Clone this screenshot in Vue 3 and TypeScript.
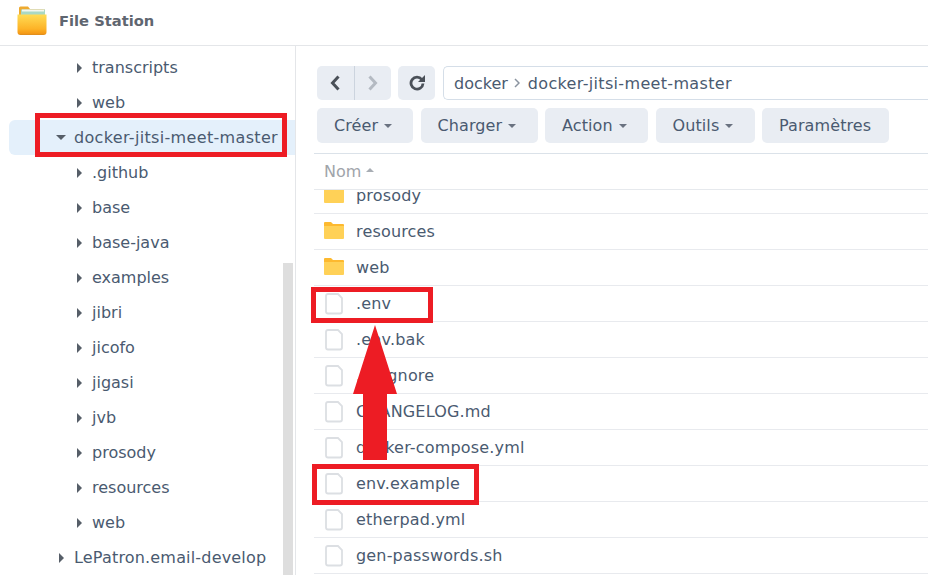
<script setup lang="ts">
const tree = [
  { name: 'transcripts', level: 2 },
  { name: 'web', level: 2 },
  { name: 'docker-jitsi-meet-master', level: 1, open: true },
  { name: '.github', level: 2 },
  { name: 'base', level: 2 },
  { name: 'base-java', level: 2 },
  { name: 'examples', level: 2 },
  { name: 'jibri', level: 2 },
  { name: 'jicofo', level: 2 },
  { name: 'jigasi', level: 2 },
  { name: 'jvb', level: 2 },
  { name: 'prosody', level: 2 },
  { name: 'resources', level: 2 },
  { name: 'web', level: 2 },
  { name: 'LePatron.email-develop', level: 1 },
]
const files = [
  { name: 'prosody', dir: true },
  { name: 'resources', dir: true },
  { name: 'web', dir: true },
  { name: '.env' },
  { name: '.env.bak' },
  { name: '.gitignore' },
  { name: 'CHANGELOG.md' },
  { name: 'docker-compose.yml' },
  { name: 'env.example' },
  { name: 'etherpad.yml' },
  { name: 'gen-passwords.sh' },
]
const actions = [
  { label: 'Créer', caret: true },
  { label: 'Charger', caret: true },
  { label: 'Action', caret: true },
  { label: 'Outils', caret: true },
  { label: 'Paramètres', caret: false },
]
</script>

<template>
  <div class="app">
    <header class="head">
      <svg class="logo" viewBox="0 0 30 30" width="30" height="30">
        <defs>
          <linearGradient id="fold" x1="0" y1="0" x2="0" y2="1">
            <stop offset="0" stop-color="#ffdc55" />
            <stop offset="0.7" stop-color="#fdb327" />
            <stop offset="0.92" stop-color="#f59a16" />
            <stop offset="1" stop-color="#d98a20" />
          </linearGradient>
        </defs>
        <path d="M2 2Q2 0.500 3.500 0.500H11l2 2.500h13Q28 3 28 5v6H2z" fill="#eeaa30" />
        <rect x="4" y="3.500" width="24" height="8" fill="#a9d8c4" />
        <rect x="5" y="3.500" width="22" height="2" fill="#f4f7ef" />
        <path d="M0.500 8.500h29v17.500q0 3-3 3H3.500q-3 0-3-3z" fill="url(#fold)" />
      </svg>
      <span class="title">File Station</span>
    </header>
    <div class="body">
      <aside class="side">
        <ul class="tree">
          <li v-for="(n, i) in tree" :key="i" class="node" :class="[`lv${n.level}`, { sel: n.open }]">
            <i :class="n.open ? 'tri-down' : 'tri-right'"></i>
            <span>{{ n.name }}</span>
          </li>
        </ul>
        <div class="scroll"></div>
      </aside>
      <main class="main">
        <div class="bar">
          <div class="group">
            <button class="icon"><svg viewBox="0 0 12 18" width="12" height="18"><path d="M9.500 2.500L3.500 9l6 6.500" fill="none" stroke="#4a5058" stroke-width="3" /></svg></button>
            <button class="icon sep"><svg viewBox="0 0 12 18" width="12" height="18"><path d="M2.500 2.500L8.500 9l-6 6.500" fill="none" stroke="#b4bac2" stroke-width="3" /></svg></button>
          </div>
          <button class="icon refresh"><svg viewBox="0 0 16 16" width="16" height="16"><path d="M12.800 4.500A6 6 0 1 0 14 8.500" fill="none" stroke="#4a5058" stroke-width="2.800" /><path d="M9 7h7V0z" fill="#4a5058" /></svg></button>
          <div class="path">
            <span>docker</span>
            <svg viewBox="0 0 6 10" width="6" height="10"><path d="M1 1l4 4-4 4" fill="none" stroke="#8b94a0" stroke-width="1.500" /></svg>
            <span class="wide">docker-jitsi-meet-master</span>
          </div>
        </div>
        <div class="actions">
          <button v-for="a in actions" :key="a.label" class="act">
            {{ a.label }}<i v-if="a.caret" class="caret"></i>
          </button>
        </div>
        <div class="colhead">Nom <i class="up"></i></div>
        <div class="listwrap">
          <ul class="list">
            <li v-for="f in files" :key="f.name" class="row">
              <svg v-if="f.dir" class="ficon folder" viewBox="0 0 20 18" width="20" height="18">
                <path d="M0 2q0-1 1-1h6l2 2h10q1 0 1 1v3H0z" fill="#fdb92f" />
                <path d="M0 5h20v12q0 1-1 1H1q-1 0-1-1z" fill="#ffd157" />
              </svg>
              <svg v-else class="ficon" viewBox="0 0 20 22" width="20" height="22">
                <path d="M2 3q0-2 2-2h10l4 4v13.500q0 2-2 2H4q-2 0-2-2z" fill="#fff" stroke="#dcdfe3" stroke-width="1.800" />
              </svg>
              <span>{{ f.name }}</span>
            </li>
          </ul>
        </div>
      </main>
    </div>
    <div class="mark m1"></div>
    <div class="mark m2"></div>
    <div class="mark m3"></div>
    <svg class="arrow" viewBox="0 0 44 135" width="44" height="135">
      <path d="M22 0L44 69H34V135H10V69H0z" fill="#ed1c24" />
    </svg>
  </div>
</template>

<style scoped>
.app { position: relative; width: 928px; height: 575px; overflow: hidden; background: #fff; font-family: "DejaVu Sans", sans-serif; font-size: 16px; color: #4a5a70; }
.head { height: 45px; border-bottom: 1px solid #e4e6e9; display: flex; align-items: center; padding-left: 17px; gap: 12px; }
.logo { flex: none; margin-top: -4px; }
.title { font-family: "DejaVu Sans", sans-serif; font-weight: 700; font-size: 14.700px; color: #5f6670; margin-top: -5px; }
.body { display: flex; height: 529px; }
.side { position: relative; width: 295px; flex: none; border-right: 1px solid #e4e6e9; overflow: hidden; }
.tree { list-style: none; margin: 4px 0 0; padding: 0; }
.node { height: 35px; display: flex; align-items: center; position: relative; white-space: nowrap; }
.lv1 { padding-left: 59px; letter-spacing: 0.180px; }
.lv2 { padding-left: 77px; }
.node span { margin-left: 10px; }
.sel { margin-left: 9px; padding-left: 47px; background: #e4f0fb; border-radius: 6px 0 0 6px; letter-spacing: 0.330px; }
.sel span { margin-left: 11px; }
.tri-right { width: 0; height: 0; border-left: 5px solid #565e68; border-top: 5px solid transparent; border-bottom: 5px solid transparent; }
.tri-down { width: 0; height: 0; border-top: 5px solid #565e68; border-left: 5.500px solid transparent; border-right: 5.500px solid transparent; margin-right: -3px; }
.scroll { position: absolute; left: 283px; top: 217px; bottom: 0; width: 10px; background: #dedede; }
.main { flex: 1; min-width: 0; padding: 20px 0 0 18px; }
.bar { display: flex; gap: 7px; margin-left: 3px; height: 34px; }
.group { display: flex; width: 74px; }
button { border: 0; font: inherit; color: inherit; padding: 0; background: #e9edf3; display: flex; align-items: center; justify-content: center; }
.group .icon { flex: 1; border-radius: 5px 0 0 5px; }
.group .sep { border-radius: 0 5px 5px 0; border-left: 1px solid #ccd4de; }
.refresh { width: 37px; border-radius: 5px; }
.path { flex: 1; margin-left: 1px; border: 1px solid #d5dee8; border-right: 0; border-radius: 5px 0 0 5px; display: flex; align-items: center; gap: 6px; padding-left: 10px; }
.wide { letter-spacing: 0.330px; margin-left: 2px; }
.actions { margin: 8px 0 0 3px; height: 35px; display: grid; grid-template-columns: 96px 117px 103px 99px 127px; gap: 7.500px; }
.act { border-radius: 5px; padding-left: 17px; gap: 6px; justify-content: flex-start; letter-spacing: 0.100px; white-space: nowrap; }
.caret { width: 0; height: 0; border-top: 4px solid #6a7280; border-left: 4.500px solid transparent; border-right: 4.500px solid transparent; }
.colhead { margin-top: 10px; height: 35px; border-top: 1px solid #dbe2e9; border-bottom: 1px solid #e6e9ed; display: flex; align-items: center; padding-left: 10px; gap: 5px; color: #a0a4aa; }
.up { width: 0; height: 0; border-bottom: 4px solid #a8adb4; border-left: 4px solid transparent; border-right: 4px solid transparent; margin-top: -3px; }
.listwrap { height: 385px; overflow: hidden; }
.list { list-style: none; margin: -12px 0 0; padding: 0; letter-spacing: 0.170px; }
.row { height: 35px; border-bottom: 1px solid #e8eaee; display: flex; align-items: center; padding-left: 10px; gap: 12px; }
.ficon { flex: none; }
.folder { margin-top: -3px; }
.mark { position: absolute; border: 5px solid #ed1c24; box-sizing: border-box; }
.m1 { left: 35px; top: 113px; width: 252px; height: 44px; }
.m2 { left: 311px; top: 287px; width: 122px; height: 36px; }
.m3 { left: 312px; top: 464px; width: 167px; height: 41px; }
.arrow { position: absolute; left: 353px; top: 325px; }
</style>
